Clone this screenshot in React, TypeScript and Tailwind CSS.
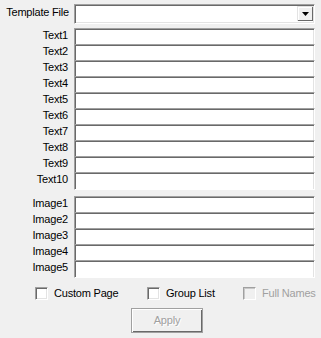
import React from "react";

const textLabels = ["Text1", "Text2", "Text3", "Text4", "Text5", "Text6", "Text7", "Text8", "Text9", "Text10"];
const imageLabels = ["Image1", "Image2", "Image3", "Image4", "Image5"];

function FieldRow({ label, last }: { label: string; last?: boolean }) {
  return (
    <div className="flex items-start">
      <div className="w-[69px] h-4 pr-[1px] text-right leading-[15px]">{label}</div>
      <div
        className={`ml-[5px] w-[241px] bg-white border-t border-l border-r border-t-[#a0a0a0] border-l-[#a0a0a0] border-r-white shadow-[inset_1px_1px_0_#696969,inset_-1px_0_0_#e3e3e3] ${
          last ? "h-[18px] border-b border-b-white shadow-[inset_1px_1px_0_#696969,inset_-1px_-1px_0_#e3e3e3]" : "h-4"
        }`}
      />
    </div>
  );
}

function Checkbox({ label, disabled, width }: { label: string; disabled?: boolean; width: string }) {
  return (
    <div className={`flex items-center whitespace-nowrap ${width}`}>
      <div
        className={`shrink-0 w-[13px] h-[13px] border border-t-[#a0a0a0] border-l-[#a0a0a0] border-r-white border-b-white ${
          disabled
            ? "bg-[#f0f0f0] shadow-[inset_1px_1px_0_#c8c8c8]"
            : "bg-white shadow-[inset_1px_1px_0_#696969,inset_-1px_-1px_0_#e3e3e3]"
        }`}
      />
      <span className={`ml-[6px] ${disabled ? "text-[#a0a0a0]" : "text-black"}`}>{label}</span>
    </div>
  );
}

export default function App() {
  return (
    <div className="w-[321px] h-[338px] bg-[#f0f0f0] text-[11px] tracking-[-0.2px] text-black font-['Liberation_Sans',Arial,sans-serif] pt-1">
      {/* Template file combo */}
      <div className="flex items-start">
        <div className="w-[69px] h-5 text-right leading-[15px] pt-[1px] whitespace-nowrap">Template File</div>
        <div className="ml-[5px] w-[241px] h-5 bg-white border border-t-[#a0a0a0] border-l-[#a0a0a0] border-r-white border-b-white shadow-[inset_1px_1px_0_#696969,inset_-1px_-1px_0_#e3e3e3] flex justify-end items-start pt-[1px] pr-[1px]">
          <div className="w-4 h-[15px] bg-[#f0f0f0] border-t border-l border-t-[#e3e3e3] border-l-[#e3e3e3] shadow-[inset_-1px_-1px_0_#696969,inset_1px_1px_0_#fff] flex items-center justify-center">
            <svg width="7" height="4" viewBox="0 0 7 4">
              <path d="M0 0h7L3.5 4z" fill="#000" />
            </svg>
          </div>
        </div>
      </div>

      {/* Text fields */}
      <div className="mt-[4px]">
        {textLabels.map((l, i) => (
          <FieldRow key={l} label={l} last={i === textLabels.length - 1} />
        ))}
      </div>

      {/* Image fields */}
      <div className="mt-[6px]">
        {imageLabels.map((l, i) => (
          <FieldRow key={l} label={l} last={i === imageLabels.length - 1} />
        ))}
      </div>

      {/* Options */}
      <div className="flex mt-[9px] pl-[35px] h-[13px] leading-[13px]">
        <Checkbox label="Custom Page" width="w-[112px]" />
        <Checkbox label="Group List" width="w-[96px]" />
        <Checkbox label="Full Names" width="w-[78px]" disabled />
      </div>

      {/* Apply */}
      <div className="mt-[8px] ml-[131px] w-[72px] h-[25px] border border-[#a0a0a0] shadow-[inset_1px_1px_0_#fff,inset_-1px_-1px_0_#696969] flex items-center justify-center text-[#a0a0a0] [text-shadow:1px_1px_0_#fff]">
        Apply
      </div>
    </div>
  );
}
